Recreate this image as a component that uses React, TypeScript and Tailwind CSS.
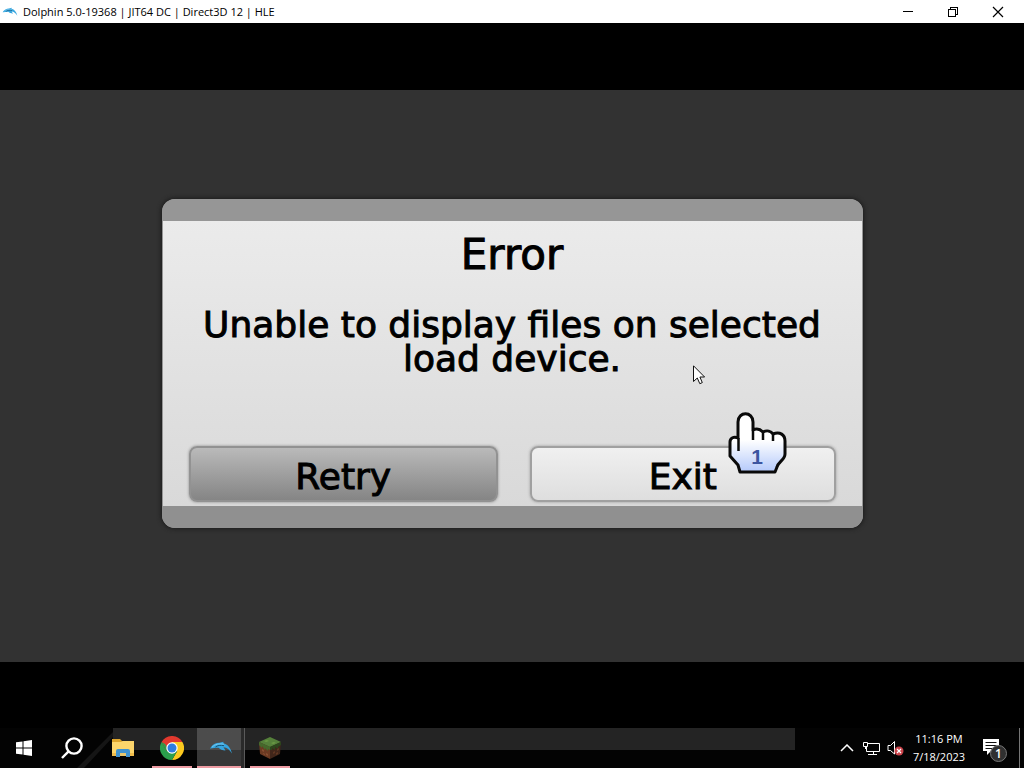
import type { ReactNode } from "react";

function DolphinIcon({ className }: { className: string }) {
  return (
    <svg viewBox="0 0 24 14" className={className} fill="none" aria-hidden="true">
      <path
        d="M1 7.500C3.500 3.500 6.500 1.800 10.500 1.800L14.500 .8L14.300 2.200C18.500 3.200 21.500 6.500 23 12.500C20.500 8.500 18 6.500 14.500 6.200L16.500 9.500C13.500 9.300 11 8.500 9.500 6.800C6.500 6.800 3.500 7.600 1 7.500Z"
        fill="#35a5df"
      />
      <path d="M6.500 6C8.500 4.400 11.500 3.900 15 4.700" stroke="#17506f" />
      <path d="M3 6.200C6 3.200 10 2.400 15 3.200" stroke="#8fd4f2" strokeWidth=".7" />
    </svg>
  );
}

function WindowButton({ label, children }: { label: string; children: ReactNode }) {
  return (
    <button type="button" aria-label={label} className="flex h-full w-[45px] items-center justify-center">
      <svg viewBox="0 0 12 12" className="size-3" fill="none" stroke="#000" shapeRendering="crispEdges" aria-hidden="true">
        {children}
      </svg>
    </button>
  );
}

function TitleBar() {
  return (
    <header className="flex h-[23px] items-center bg-white pl-[2px] pr-1 text-black">
      <DolphinIcon className="h-[10px] w-4 shrink-0" />
      <h1 className="ml-[5px] flex-1 text-[11px] leading-4">Dolphin 5.0-19368 | JIT64 DC | Direct3D 12 | HLE</h1>
      <WindowButton label="Minimize">
        <path d="M1 5.500h10" />
      </WindowButton>
      <WindowButton label="Restore">
        <path d="M1.500 3.500h7v7h-7zM3.500 3V1.500h7v7H9" />
      </WindowButton>
      <WindowButton label="Close">
        <path d="M1 1l10 10M11 1L1 11" shapeRendering="auto" strokeWidth="1.200" />
      </WindowButton>
    </header>
  );
}

function HandPointer() {
  return (
    <svg
      viewBox="0 0 62 66"
      className="pointer-events-none absolute -top-[36px] right-[48px] h-[66px] w-[62px]"
      aria-hidden="true"
    >
      <defs>
        <linearGradient id="hand" x1="0" y1="0" x2="0" y2="1">
          <stop offset="0.45" stopColor="#fff" />
          <stop offset="1" stopColor="#b4c9fb" />
        </linearGradient>
      </defs>
      <path
        d="M12 27V12C12 1 27 1 27 12V20C31 18 35 20 37 22C41 20 45 21 47 24C54 21 59 25 59 31V44C59 50 52 52 51 57L49 62H14L12 55L4 46V32C4 28 8 26 12 28Z"
        fill="url(#hand)"
        stroke="#0a0a0a"
        strokeWidth="3"
        strokeLinejoin="round"
      />
      <path d="M12.500 28V41M27 20V30M37 22V30M47 24V31" stroke="#0a0a0a" strokeWidth="2.500" fill="none" />
      <text x="31" y="54" textAnchor="middle" fontSize="21" fontWeight="700" fontFamily="Liberation Sans, sans-serif" fill="#3c55a0">
        1
      </text>
    </svg>
  );
}

function MousePointer() {
  return (
    <svg
      viewBox="0 0 12 20"
      className="pointer-events-none absolute right-[157px] top-[144px] h-5 w-3"
      aria-hidden="true"
    >
      <path d="M.5.8V16.500L4.300 13L6.800 18.700L9.300 17.600L6.900 12H11.600Z" fill="#fff" stroke="#111" />
    </svg>
  );
}

function ErrorDialog() {
  return (
    <section
      role="alertdialog"
      aria-labelledby="error-title"
      aria-describedby="error-text"
      className="flex w-full max-w-[701px] flex-col overflow-hidden rounded-[13px] bg-[#969696] font-['DejaVu_Sans',sans-serif] text-black shadow-[0_0_4px_1px_#1c1c1c]"
    >
      <div className="h-[22px] bg-[#969696]" />
      <div className="relative mx-px flex min-h-[285px] flex-col bg-linear-to-b from-[#ebebeb] to-[#d9d9d9] pb-1">
        <h2
          id="error-title"
          className="mt-[10px] text-center text-[42px] leading-[48px] [-webkit-text-stroke:1px_black]"
        >
          Error
        </h2>
        <p
          id="error-text"
          className="mt-[29px] text-center text-[36px] leading-[34px] [-webkit-text-stroke:1px_black]"
        >
          Unable to display files on selected
          <br />
          load device.
        </p>
        <div className="mt-auto flex gap-8 px-[26px]">
          <button
            type="button"
            className="h-[56px] flex-1 rounded-lg border-2 border-[#929292] bg-linear-to-b from-[#bababa] to-[#858585] pt-[6px] text-[36px] leading-none shadow-[0_0_3px_#888] [-webkit-text-stroke:1px_black]"
          >
            Retry
          </button>
          <div className="relative flex flex-1">
            <button
              type="button"
              className="h-[56px] flex-1 rounded-lg border-2 border-[#a0a0a0] bg-linear-to-b from-[#f0f0f0] to-[#dedede] pt-[6px] text-[36px] leading-none shadow-[0_0_3px_#999] [-webkit-text-stroke:1px_black]"
            >
              Exit
            </button>
            <HandPointer />
          </div>
        </div>
        <MousePointer />
      </div>
      <div className="h-[22px] bg-[#909090]" />
    </section>
  );
}

function TaskButton({ label, className, children }: { label: string; className: string; children: ReactNode }) {
  return (
    <button type="button" aria-label={label} className={"flex h-10 shrink-0 items-center justify-center " + className}>
      {children}
    </button>
  );
}

function StartIcon() {
  return (
    <svg viewBox="0 0 16 16" className="size-4" fill="#fff" aria-hidden="true">
      <path d="M0 2.300L6.500 1.400V7.500H0zM7.500 1.200L16 0V7.500H7.500zM0 8.500H6.500V14.600L0 13.700zM7.500 8.500H16V16L7.500 14.800z" />
    </svg>
  );
}

function SearchIcon() {
  return (
    <svg viewBox="0 0 22 22" className="h-[22px] w-[22px]" fill="none" stroke="#fff" strokeWidth="2.400" aria-hidden="true">
      <circle cx="13" cy="9" r="7.600" />
      <path d="M7.600 14.400L1 21" />
    </svg>
  );
}

function FolderIcon() {
  return (
    <svg viewBox="0 0 22 18" className="h-[18px] w-[22px]" aria-hidden="true">
      <path d="M0 0H8L10 2H21V5H0z" fill="#dda52d" />
      <path d="M0 3H9L11 2H22V17H0z" fill="#fcd56b" />
      <path d="M0 14H22V17H0z" fill="#efbc4c" />
      <path d="M4 18V12Q4 10 6 10H16Q18 10 18 12V18H14V14H8V18z" fill="#3f92cf" />
      <path d="M8 14H14V17H8z" fill="#e7c66d" />
    </svg>
  );
}

function ChromeIcon() {
  return (
    <svg viewBox="0 0 24 24" className="size-6" aria-hidden="true">
      <path d="M12 12L1.600 6A12 12 0 0 1 22.400 6z" fill="#e2392e" />
      <path d="M12 12V6H22.400A12 12 0 0 1 12 24L17.200 15z" fill="#fcc91f" />
      <path d="M1.600 6A12 12 0 0 0 12 24L17.200 15L12 12L6.800 15z" fill="#2b9f4c" />
      <path d="M1.600 6L6.800 15L12 12V6z" fill="#e2392e" />
      <path d="M1.600 6L6.800 15L8 13L5 8z" fill="#2b9f4c" />
      <circle cx="12" cy="12" r="5.700" fill="#fff" />
      <circle cx="12" cy="12" r="4.500" fill="#2f7de1" />
    </svg>
  );
}

function GrassBlockIcon() {
  return (
    <svg viewBox="0 0 24 24" className="size-6" aria-hidden="true">
      <path d="M1 6L12 11V23L2 18z" fill="#6b3a22" />
      <path d="M12 11L23 6L22 18L12 23z" fill="#41261a" />
      <path d="M12 1L23 6L12 11L1 6z" fill="#55803a" />
      <path d="M1 6L12 11V14L10 13V15L7 12V14L4 10V12L1 9z" fill="#45682b" />
      <path d="M12 11L23 6V9L20 11V13L17 11V14L14 12V14L12 14z" fill="#2c451c" />
      <path d="M4 13l2 1v2l-2-1zM8 17l2 1v2l-2-1zM5 17l2 1v1l-2-1z" fill="#874e31" />
      <path d="M15 16l2-1v2l-2 1zM19 13l2-1v2l-2 1zM18 17l2-1v2l-2 1z" fill="#5f3722" />
      <path d="M6 5l3-1 2 1-3 1zM13 7l3-1 2 1-3 1z" fill="#6b9a45" />
    </svg>
  );
}

function Tray() {
  return (
    <div className="ml-auto flex h-10 shrink-0 items-center">
      <button type="button" aria-label="Show hidden icons" className="flex w-6 justify-center">
        <svg viewBox="0 0 14 8" className="h-2 w-[14px]" fill="none" stroke="#fff" strokeWidth="1.500" aria-hidden="true">
          <path d="M1 7L7 1L13 7" />
        </svg>
      </button>
      <button type="button" aria-label="Network" className="flex w-6 justify-center">
        <svg viewBox="0 0 17 15" className="h-[15px] w-[17px]" fill="none" stroke="#fff" aria-hidden="true">
          <path d="M5 2.500H16.500V10.500H3.500V6M10.500 10.500V13.500M5 13.500H14M.5 1.500H4.500V5.500H.5zM2.500 5.500V8" />
        </svg>
      </button>
      <button type="button" aria-label="Volume muted" className="flex w-6 justify-center">
        <svg viewBox="0 0 17 16" className="h-4 w-[17px]" fill="none" aria-hidden="true">
          <path d="M1 5.500H3.500L7.500 1.500V14L3.500 10.500H1z" stroke="#fff" />
          <circle cx="12" cy="11" r="4.500" fill="#cb444b" />
          <path d="M10 9L14 13M14 9L10 13" stroke="#fff" strokeWidth="1.200" />
        </svg>
      </button>
      <time dateTime="2023-07-18T23:16" className="w-[64px] text-center text-[11px] leading-[18px] text-white">
        11:16 PM
        <br />
        7/18/2023
      </time>
      <button type="button" aria-label="Notifications" className="flex w-12 justify-center">
        <svg viewBox="0 0 26 26" className="mt-1 h-[26px] w-[26px]" aria-hidden="true">
          <path d="M1 2H17V14H9L5 18V14H1z" fill="#fff" />
          <path d="M3.500 5.500H14.500M3.500 8.500H14.500M3.500 11.500H11" stroke="#111" />
          <circle cx="16.500" cy="16.500" r="8" fill="#303030" stroke="#777" />
          <text x="16.500" y="21" textAnchor="middle" fontSize="12" fontWeight="600" fontFamily="Open Sans, sans-serif" fill="#fff">
            1
          </text>
        </svg>
      </button>
      <button type="button" aria-label="Show desktop" className="h-10 w-[5px] border-l border-[#777]" />
    </div>
  );
}

function Taskbar() {
  return (
    <footer className="relative isolate flex h-10 items-center bg-[#030303]">
      <div className="absolute left-[113px] right-[229px] top-0 -z-10 h-[22px] bg-[#242424]" />
      <svg viewBox="0 0 40 40" className="absolute left-[77px] top-0 -z-10 size-10" aria-hidden="true">
        <path d="M0 40L36 4V9L7 40z" fill="#151515" />
      </svg>
      <TaskButton label="Start" className="w-12">
        <StartIcon />
      </TaskButton>
      <TaskButton label="Search" className="w-12">
        <SearchIcon />
      </TaskButton>
      <TaskButton label="File Explorer" className="ml-[2px] w-[50px]">
        <FolderIcon />
      </TaskButton>
      <TaskButton label="Google Chrome" className="ml-1 w-10 shadow-[inset_0_-2px_#ee9ca3]">
        <ChromeIcon />
      </TaskButton>
      <TaskButton
        label="Dolphin"
        className="ml-[5px] w-12 bg-linear-to-b from-[#4c4c4c] from-55% to-[#373737] to-55% shadow-[inset_-1px_0_#5a5a5a,inset_-4px_0_#2a2a2a,inset_0_-2px_#ee9ca3]"
      >
        <DolphinIcon className="h-[14px] w-6" />
      </TaskButton>
      <TaskButton label="Minecraft" className="ml-[5px] w-10 shadow-[inset_0_-2px_#ee9ca3]">
        <GrassBlockIcon />
      </TaskButton>
      <Tray />
    </footer>
  );
}

export default function App() {
  return (
    <div className="flex min-h-screen flex-col bg-black font-['Open_Sans','Noto_Sans',sans-serif]">
      <TitleBar />
      <main className="flex flex-1 flex-col pb-[66px] pt-[67px]">
        <div className="flex flex-1 items-start justify-center bg-[#323232] pb-10 pt-[109px]">
          <ErrorDialog />
        </div>
      </main>
      <Taskbar />
    </div>
  );
}
